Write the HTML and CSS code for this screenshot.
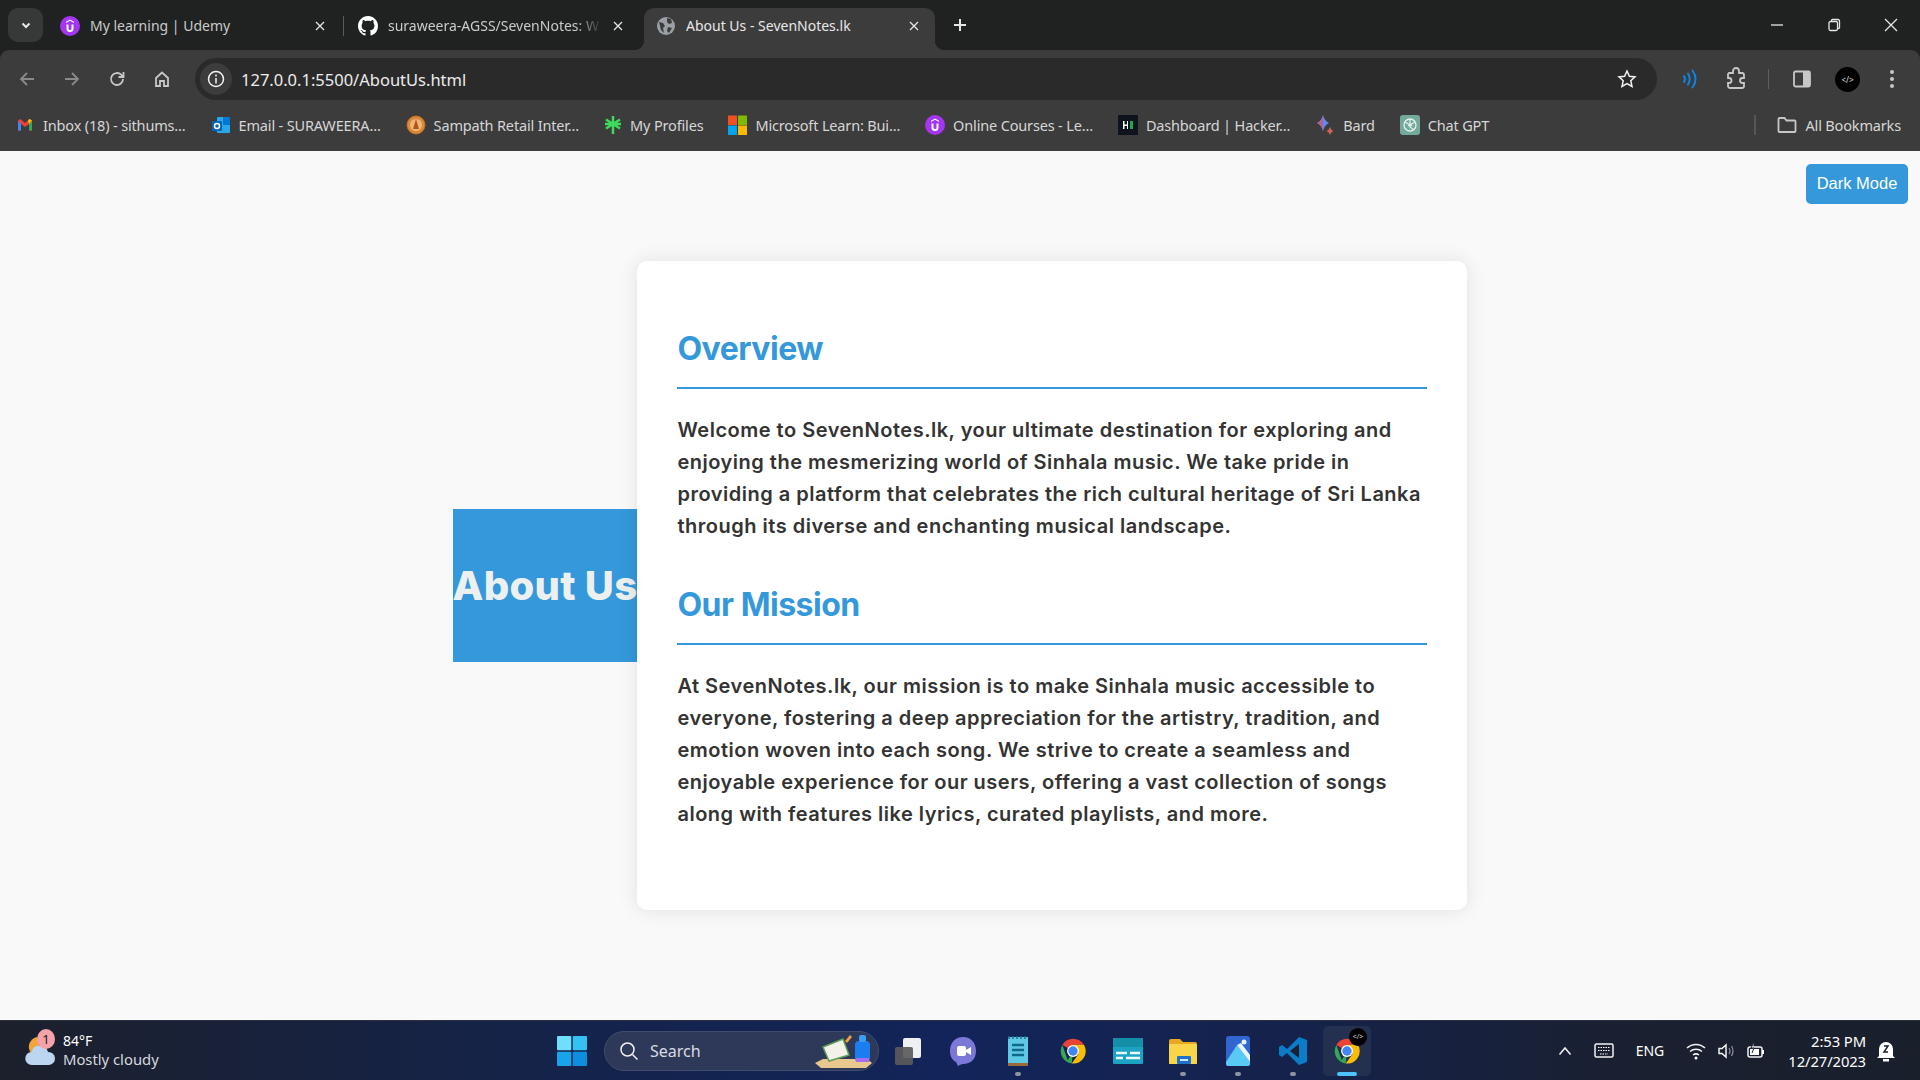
FILE: index.html
```html
<!DOCTYPE html>
<html lang="en">
<head>
<meta charset="utf-8">
<title>About Us - SevenNotes.lk</title>
<link rel="stylesheet" href="styles.css">
</head>
<body>
<svg class="defs" width="0" height="0">
  <defs>
    <symbol id="udemy" viewBox="0 0 20 20"><circle cx="10" cy="10" r="10" fill="#a435f0"/><path d="M6.500 8.500v4a3.500 3.500 0 0 0 7 0v-4h-2v4a1.500 1.500 0 0 1-3 0v-4z" fill="#fff"/><path d="M10 3.500l4 2.200v1.300l-4-2.200-4 2.200V5.700z" fill="#fff"/></symbol>
    <symbol id="chrome" viewBox="0 0 48 48"><path d="M24 24 7 14.200A20 20 0 0 1 41.500 14H24z" fill="#ea4335"/><path d="M24 24l-8.500 14.800L7 14.200A20 20 0 0 0 22 44z" fill="#34a853"/><path d="M24 14h17.500A20 20 0 0 1 22 44l10.500-15z" fill="#fbbc04"/><circle cx="24" cy="24" r="9.500" fill="#fff"/><circle cx="24" cy="24" r="7.500" fill="#4285f4"/></symbol>
  </defs>
</svg>

<div class="chrome">
<header class="tabstrip">
  <button class="tabmenu"><svg width="12" height="12" viewBox="0 0 12 12"><path d="M2.500 4.500 6 8l3.500-3.500" class="st-w2"/></svg></button>
  <div class="tab">
    <svg class="fav" width="20" height="20"><use href="#udemy"/></svg>
    <span class="tab-title">My learning | Udemy</span>
    <svg class="tab-x" width="12" height="12" viewBox="0 0 12 12"><path d="M2 2l8 8M10 2l-8 8" class="st-l"/></svg>
  </div>
  <div class="tab tab-sep">
    <svg class="fav" width="20" height="20" viewBox="0 0 16 16"><path fill="#fff" d="M8 0C3.580 0 0 3.580 0 8c0 3.540 2.290 6.530 5.470 7.590.4.070.55-.17.55-.38 0-.19-.01-.82-.01-1.490-2.010.37-2.530-.49-2.690-.94-.09-.23-.48-.94-.82-1.130-.28-.15-.68-.52-.01-.53.63-.01 1.080.58 1.230.82.720 1.210 1.870.870 2.330.660.070-.520.280-.870.510-1.070-1.780-.2-3.640-.890-3.640-3.950 0-.870.310-1.590.820-2.150-.08-.2-.36-1.020.08-2.120 0 0 .670-.210 2.200.820.640-.180 1.320-.270 2-.270s1.360.090 2 .270c1.530-1.040 2.200-.820 2.200-.820.440 1.100.160 1.920.080 2.120.510.560.820 1.270.820 2.150 0 3.070-1.870 3.750-3.650 3.950.290.250.540.730.540 1.480 0 1.070-.010 1.930-.010 2.200 0 .210.150.460.550.380A8.010 8.010 0 0 0 16 8c0-4.420-3.580-8-8-8z"/></svg>
    <span class="tab-title tab-fade">suraweera-AGSS/SevenNotes: W</span>
    <svg class="tab-x" width="12" height="12" viewBox="0 0 12 12"><path d="M2 2l8 8M10 2l-8 8" class="st-l"/></svg>
  </div>
  <div class="tab tab-active">
    <svg class="fav" width="20" height="20" viewBox="0 0 20 20"><circle cx="10" cy="10" r="9" fill="#9aa0a6"/><path d="M3 6l4 1 2 3-2 2 1 5-3-3zM11 2l4 1 1 4-3 1-2-2zM12 11l4 1-3 5-2-2z" fill="#3c3c3c"/></svg>
    <span class="tab-title tab-title-on">About Us - SevenNotes.lk</span>
    <svg class="tab-x" width="12" height="12" viewBox="0 0 12 12"><path d="M2 2l8 8M10 2l-8 8" class="st-l"/></svg>
  </div>
  <svg class="newtab" width="14" height="14" viewBox="0 0 14 14"><path d="M7 1v12M1 7h12" class="st-w2"/></svg>
  <div class="winctl">
    <svg width="14" height="14" viewBox="0 0 14 14"><path d="M1 7h12" class="st-l"/></svg>
    <svg width="14" height="14" viewBox="0 0 14 14"><rect x="2" y="3.500" width="8.500" height="9" rx="1.500" class="st-l"/><path d="M4.500 3.500V2.500a1 1 0 0 1 1-1H11a1.500 1.500 0 0 1 1.500 1.500v6.500a1 1 0 0 1-1 1h-1" class="st-l"/></svg>
    <svg width="14" height="14" viewBox="0 0 14 14"><path d="M1 1l12 12M13 1L1 13" class="st-l"/></svg>
  </div>
</header>

<nav class="toolbar">
  <svg class="tb-ic tb-back" width="18" height="18" viewBox="0 0 18 18"><path d="M16 9H3M9 3 3 9l6 6" class="st-dim"/></svg>
  <svg class="tb-ic" width="18" height="18" viewBox="0 0 18 18"><path d="M2 9h13M9 3l6 6-6 6" class="st-dim"/></svg>
  <svg class="tb-ic" width="18" height="18" viewBox="0 0 18 18"><path d="M15 9a6 6 0 1 1-1.800-4.300L15 6.500" class="st-br"/><path d="M15.500 2v5h-5" class="st-br"/></svg>
  <svg class="tb-ic" width="18" height="18" viewBox="0 0 18 18"><path d="M3 8 9 2.500 15 8v8h-4v-5H7v5H3z" class="st-br"/></svg>
  <div class="omnibox">
    <span class="info"><svg width="18" height="18" viewBox="0 0 18 18"><circle cx="9" cy="9" r="7.500" class="st-w"/><path d="M9 8v5.500M9 4.500v2" class="st-w"/></svg></span>
    <span class="url">127.0.0.1:5500/AboutUs.html</span>
    <svg class="star" width="20" height="20" viewBox="0 0 20 20"><path d="m10 2 2.400 5.300 5.600.6-4.200 3.800 1.200 5.700L10 14.500l-5 2.900 1.200-5.700L2 7.900l5.600-.6z" class="st-w"/></svg>
  </div>
  <div class="tb-right">
    <svg width="20" height="22" viewBox="0 0 20 22"><path d="M4 8q2 3 0 6M8 5.500q3.500 5.500 0 11M12.500 2.500q6 8.500 0 17" class="st-blue"/></svg>
    <svg class="tb-puzzle" width="22" height="24" viewBox="0 0 22 24"><path d="M4 6h4V4a3 3 0 0 1 6 0v2h3a2 2 0 0 1 2 2v3h-1.500a2.500 2.500 0 0 0 0 5H19v3a2 2 0 0 1-2 2H5a2 2 0 0 1-2-2v-3h1a2.500 2.500 0 0 0 0-5H3V7z" class="st-br"/></svg>
    <span class="tb-sep"></span>
    <svg width="20" height="20" viewBox="0 0 20 20"><rect x="2" y="2.500" width="16" height="15" rx="1.500" class="st-br"/><rect x="11" y="2.500" width="7" height="15" fill="#c7c7c7"/></svg>
    <span class="avatar">&lt;/&gt;</span>
    <svg width="6" height="20" viewBox="0 0 6 20"><circle cx="3" cy="3" r="2" fill="#c7c7c7"/><circle cx="3" cy="10" r="2" fill="#c7c7c7"/><circle cx="3" cy="17" r="2" fill="#c7c7c7"/></svg>
  </div>
</nav>

<nav class="bookmarks">
  <a class="bm"><svg width="20" height="16" viewBox="0 0 16 16"><path d="M1 3.500v10h3V7l4 3 4-3v6.500h3v-10L12.500 2 8 6 3.500 2z" fill="#ea4335"/><path d="M1 3.500v10h3V7z" fill="#4285f4"/><path d="M12 7v6.500h3v-10z" fill="#34a853"/><path d="M15 3.500 12.500 2 11 3.300 12 7z" fill="#fbbc04"/></svg>Inbox (18) - sithums...</a>
  <a class="bm"><svg width="20" height="18" viewBox="0 0 20 18"><rect x="6" y="1" width="13" height="16" rx="1" fill="#28a8ea"/><rect x="12" y="1" width="7" height="8" fill="#0078d4"/><rect x="1" y="5" width="10" height="10" rx="1" fill="#0364b8"/><circle cx="6" cy="10" r="2.500" fill="none" stroke="#fff" stroke-width="1.500"/></svg>Email - SURAWEERA...</a>
  <a class="bm"><svg width="20" height="20" viewBox="0 0 20 20"><circle cx="10" cy="10" r="9" fill="#d98a3a" stroke="#c96f1f"/><circle cx="10" cy="10" r="6" fill="#f0b67a"/><path d="M10 4l3 10H7z" fill="#b5541a"/></svg>Sampath Retail Inter...</a>
  <a class="bm"><svg width="18" height="20" viewBox="0 0 18 20"><path d="M9 1v18M2 4.500l14 9M16 4.500l-14 9M1 9h16" stroke="#3ddc5c" stroke-width="2.500" fill="none"/></svg>My Profiles</a>
  <a class="bm"><svg width="19" height="20" viewBox="0 0 19 20"><rect width="9" height="9.500" y=".5" fill="#f25022"/><rect x="10" y=".5" width="9" height="9.500" fill="#7fba00"/><rect y="10.500" width="9" height="9.500" fill="#00a4ef"/><rect x="10" y="10.500" width="9" height="9.500" fill="#ffb900"/></svg>Microsoft Learn: Bui...</a>
  <a class="bm"><svg width="20" height="20"><use href="#udemy"/></svg>Online Courses - Le...</a>
  <a class="bm"><svg width="20" height="20" viewBox="0 0 20 20"><rect width="20" height="20" fill="#0e141e"/><path d="M5 6v8h1.500v-3H9v3h1V6H9v3.500H6.500V6z" fill="#fff"/><rect x="12" y="6" width="3" height="8" fill="#1ba94c"/></svg>Dashboard | Hacker...</a>
  <a class="bm"><svg width="20" height="22" viewBox="0 0 20 22"><path d="M8 1q1.500 6 6 8-4.500 2-6 8-1.500-6-6-8 4.500-2 6-8z" fill="#5b8df0"/><path d="M8 1q-1.500 6-6 8 4.500 2 6 8z" fill="#b5608f"/><path d="M15 13q.8 3 3.500 4-2.700 1-3.500 4-.8-3-3.500-4 2.700-1 3.500-4z" fill="#d6605a"/></svg>Bard</a>
  <a class="bm"><svg width="20" height="20" viewBox="0 0 20 20"><rect width="20" height="20" rx="3" fill="#74aa9c"/><circle cx="10" cy="10" r="6" fill="none" stroke="#e8f1ee" stroke-width="1.300"/><path d="M10 4v8l4 3M5 7l7 4M15 7l-7 4" stroke="#e8f1ee" stroke-width="1.100" fill="none"/></svg>Chat GPT</a>
  <span class="bm-end"><span class="bm-sep"></span><a class="bm"><svg width="20" height="18" viewBox="0 0 20 18"><path d="M1.500 3a1 1 0 0 1 1-1h5l2 2.500h8a1 1 0 0 1 1 1V15a1 1 0 0 1-1 1h-15a1 1 0 0 1-1-1z" class="st-br"/></svg>All Bookmarks</a></span>
</nav>
</div>

<main class="page">
  <button class="dark-btn">Dark Mode</button>
  <h1 class="about-tag">About Us</h1>
  <article class="card">
    <section class="block">
      <h2 class="block-title">Overview</h2>
      <p class="block-text">Welcome to SevenNotes.lk, your ultimate destination for exploring and enjoying the mesmerizing world of Sinhala music. We take pride in providing a platform that celebrates the rich cultural heritage of Sri Lanka through its diverse and enchanting musical landscape.</p>
    </section>
    <section class="block">
      <h2 class="block-title">Our Mission</h2>
      <p class="block-text">At SevenNotes.lk, our mission is to make Sinhala music accessible to everyone, fostering a deep appreciation for the artistry, tradition, and emotion woven into each song. We strive to create a seamless and enjoyable experience for our users, offering a vast collection of songs along with features like lyrics, curated playlists, and more.</p>
    </section>
  </article>
</main>

<footer class="taskbar">
  <div class="weather">
    <span class="wx-ic">
      <svg width="36" height="36" viewBox="0 0 36 36"><path d="M14 4a10 10 0 0 0-6 16h10z" fill="#f2a33a"/><path d="M9 32a6.500 6.500 0 0 1-.5-13A8.500 8.500 0 0 1 25 19a6.500 6.500 0 0 1 1 13z" fill="#bcd6f2"/></svg>
      <span class="wx-badge">1</span>
    </span>
    <span class="wx-text"><b class="wx-temp">84°F</b><span>Mostly cloudy</span></span>
  </div>
  <div class="task-center">
    <svg class="start" width="30" height="30" viewBox="0 0 30 30"><rect width="14.300" height="14.300" rx="1" fill="#6ee0fb"/><rect x="15.700" width="14.300" height="14.300" rx="1" fill="#35c2f2"/><rect y="15.700" width="14.300" height="14.300" rx="1" fill="#19a4ea"/><rect x="15.700" y="15.700" width="14.300" height="14.300" rx="1" fill="#0d8fe0"/></svg>
    <div class="search">
      <svg width="20" height="20" viewBox="0 0 20 20"><circle cx="8.500" cy="8.500" r="6.500" class="st-w"/><path d="m13.500 13.500 5 5" class="st-w"/></svg>
      <span class="search-label">Search</span>
      <svg class="search-art" width="60" height="36" viewBox="0 0 60 36"><path d="M2 30 10 26h44l5 4-6 5H8z" fill="#e8c88f"/><path d="M10 14 30 6l6 16-20 6z" fill="#f2f2ea" stroke="#5f9e58" stroke-width="1.500"/><path d="m32 8 5-6 2 2-5 6z" fill="#f0a040"/><rect x="42" y="8" width="15" height="21" rx="4" fill="#1c7df0"/><rect x="46" y="2" width="7" height="7" rx="2" fill="#3aa0f5"/><rect x="43" y="25" width="13" height="4" fill="#a86cf0"/></svg>
    </div>
    <div class="apps">
      <span class="app"><svg width="30" height="30" viewBox="0 0 30 30"><rect x="10" y="2" width="18" height="20" rx="2" fill="#eef0f2"/><rect x="2" y="11" width="18" height="18" rx="2" fill="#5b5b5b" opacity=".92"/></svg></span>
      <span class="app"><svg width="30" height="32" viewBox="0 0 30 32"><path d="M15 2c8 0 13 6 13 14s-5 13-13 13c-2 0-3 1-5 2-1-1-1-3-2-4-4-2-6-6-6-11C2 8 7 2 15 2z" fill="#7c78d8"/><rect x="9" y="11" width="9" height="10" rx="2" fill="#fff"/><path d="m18 15 5-3v8l-5-3z" fill="#fff"/></svg></span>
      <span class="app app-open"><svg width="24" height="32" viewBox="0 0 24 32"><rect x="2" y="2" width="20" height="29" fill="#5fc8e4"/><rect x="2" y="28" width="20" height="3" fill="#9a6a3a"/><path d="M3 1v3M7 1v3M11 1v3M15 1v3M19 1v3" stroke="#1d6f8c" stroke-width="1.500"/><path d="M6 10h12M6 15h12M6 20h12" stroke="#0d6a8a" stroke-width="2.500"/></svg></span>
      <span class="app"><svg width="30" height="30"><use href="#chrome"/></svg></span>
      <span class="app"><svg width="30" height="30" viewBox="0 0 30 30"><rect y="2" width="30" height="26" rx="1" fill="#1ba3c4"/><rect y="2" width="30" height="9" fill="#158ea8"/><path d="M3 17h11M17 17h10M3 22h7M13 22h14" stroke="#eaf8fb" stroke-width="2.500"/></svg></span>
      <span class="app app-open"><svg width="30" height="30" viewBox="0 0 30 30"><path d="M1 5a2 2 0 0 1 2-2h9l3 3h12a2 2 0 0 1 2 2v19a1 1 0 0 1-1 1H2a1 1 0 0 1-1-1z" fill="#e9a821"/><rect x="1" y="8" width="28" height="20" rx="1" fill="#f8d549"/><rect x="9" y="20" width="14" height="8" rx="1" fill="#1d72c9"/><rect x="12" y="23" width="8" height="2" fill="#cfe6fa"/></svg></span>
      <span class="app app-open"><svg width="26" height="32" viewBox="0 0 26 32"><rect x="1" y="1" width="24" height="30" rx="3" fill="#2f66cf"/><path d="M1 27 12 10l13 17v2a2 2 0 0 1-2 2H3a2 2 0 0 1-2-2z" fill="#59c9f5"/><path d="m12 10 13 17v-7L16 8z" fill="#e8f7fd"/><circle cx="19" cy="7" r="2.500" fill="#dff3fc"/></svg></span>
      <span class="app app-open"><svg width="30" height="30" viewBox="0 0 30 30"><path d="M21 1 9 13 4 9 1 11v8l3 2 5-4 12 12 8-3V4z" fill="#0a7cc8"/><path d="M21 8v14l-9-7z" fill="#1d1f33"/></svg></span>
      <span class="app app-active">
        <svg width="30" height="30"><use href="#chrome"/></svg>
        <span class="app-code">&lt;/&gt;</span>
        <span class="app-bar"></span>
      </span>
    </div>
  </div>
  <div class="tray">
    <svg width="14" height="10" viewBox="0 0 14 10"><path d="M1.500 8.500 7 2l5.500 6.500" class="st-w"/></svg>
    <svg width="20" height="16" viewBox="0 0 20 16"><rect x="1" y="1" width="18" height="13" rx="1.500" class="st-w"/><path d="M4 4.500h12M4 7.500h12M6 11h8" stroke="#fff" stroke-dasharray="1.500 1" fill="none"/></svg>
    <span class="lang">ENG</span>
    <span class="tray-net">
      <svg width="20" height="18" viewBox="0 0 20 18"><path d="M1 6a13 13 0 0 1 18 0M4 9.500a9 9 0 0 1 12 0M7 13a5 5 0 0 1 6 0" class="st-w"/><circle cx="10" cy="16" r="1.500" fill="#fff"/></svg>
      <svg width="18" height="18" viewBox="0 0 18 18"><path d="M2 6.500h3L9 3v12l-4-3.500H2z" class="st-w"/><path d="M12 6q2 3 0 6M14.500 4q3 5 0 10" class="st-w-dim"/></svg>
      <svg width="20" height="18" viewBox="0 0 20 18"><rect x="2" y="5" width="14" height="10" rx="2" class="st-w"/><rect x="16" y="8" width="2" height="4" fill="#fff"/><rect x="4" y="7" width="9" height="6" fill="#fff"/><path d="M8 0 5 6h3l-2 5" stroke="#1a2030" fill="#fff"/></svg>
    </span>
    <span class="clock"><span>2:53 PM</span><span>12/27/2023</span></span>
    <svg class="bell" width="20" height="22" viewBox="0 0 20 22"><path d="M3 16V9a7 7 0 0 1 14 0v7l2 2H1z" fill="#fff"/><rect x="7" y="19" width="6" height="2.500" fill="#fff"/><path d="M8 6h4l-4 6h4" stroke="#1a2030" stroke-width="1.500" fill="none"/></svg>
  </div>
</footer>
</body>
</html>
```

FILE: styles.css
```css
* { box-sizing: border-box; }
html, body { height: 100%; margin: 0; }
body {
  display: flex;
  flex-direction: column;
  height: 1080px;
  overflow: hidden;
  font-family: "Noto Sans", "Open Sans", sans-serif;
  background: #f9f9f9;
}
.defs { position: absolute; }
.st-l { fill: none; stroke: #e6e6e6; stroke-width: 1.3; }
.st-w { fill: none; stroke: #f2f2f2; stroke-width: 1.5; }
.st-w-dim { fill: none; stroke: #8d93a3; stroke-width: 1.2; }
.st-w2 { fill: none; stroke: #e8e8e8; stroke-width: 2; }
.st-dim { fill: none; stroke: #8a8a8a; stroke-width: 1.8; }
.st-br { fill: none; stroke: #c7c7c7; stroke-width: 1.8; }
.st-blue { fill: none; stroke: #0d84e4; stroke-width: 2; stroke-linecap: round; }

.chrome { flex: none; background: #202221; }

/* tab strip */
.tabstrip {
  height: 50px;
  display: flex;
  align-items: flex-end;
  padding-left: 8px;
}
.tabmenu {
  flex: 0 0 35px;
  height: 34px;
  margin: 0 5px 8px 0;
  padding: 0;
  border: 0;
  border-radius: 10px;
  background: #373938;
  display: flex;
  align-items: center;
  justify-content: center;
}
.tab {
  flex: 0 0 298px;
  height: 42px;
  display: flex;
  align-items: center;
  gap: 10px;
  padding: 0 20px 7px 12px;
  position: relative;
  font-size: 14px;
  color: #c9cbca;
}
.tab-sep::before {
  content: "";
  position: absolute;
  left: -3px;
  top: 8px;
  height: 20px;
  width: 1px;
  background: #5a5c5b;
}
.tab-active {
  flex-basis: 291px;
  padding-right: 15px;
  background: #3c3c3c;
  border-radius: 10px 10px 0 0;
  color: #e8e8e8;
}
.tab-active::before, .tab-active::after {
  content: "";
  position: absolute;
  bottom: 0;
  width: 10px;
  height: 10px;
}
.tab-active::before { left: -10px; background: radial-gradient(circle at 0 0, transparent 10px, #3c3c3c 10.5px); }
.tab-active::after { right: -10px; background: radial-gradient(circle at 100% 0, transparent 10px, #3c3c3c 10.5px); }
.fav { flex: none; }
.tab-title { flex: 1; white-space: nowrap; overflow: hidden; }
.tab-fade { -webkit-mask-image: linear-gradient(90deg, #000 88%, transparent); mask-image: linear-gradient(90deg, #000 88%, transparent); }
.tab-x { flex: none; }
.newtab { margin: 0 0 18px 18px; }
.winctl {
  margin-left: auto;
  display: flex;
  gap: 43px;
  padding-right: 22px;
  align-self: center;
  align-items: center;
}

/* toolbar */
.toolbar {
  height: 50px;
  display: flex;
  align-items: center;
  padding: 8px 11px 0 18px;
  background: #3c3c3c;
  border-radius: 9px 9px 0 0;
}
.tb-ic { margin-right: 27px; flex: none; }
.omnibox {
  flex: 0 0 1462px;
  margin-left: -3px;
  height: 42px;
  display: flex;
  align-items: center;
  padding: 0 20px 0 5px;
  border-radius: 21px;
  background: #2a2a2a;
}
.info {
  width: 32px;
  height: 32px;
  border-radius: 50%;
  background: #3c3c3c;
  display: flex;
  align-items: center;
  justify-content: center;
}
.url { flex: 1; padding-left: 9px; font-size: 16.5px; color: #ececec; }
.star { flex: none; }
.tb-right {
  flex: 1;
  display: flex;
  align-items: center;
  gap: 23px;
  padding-left: 23px;
}
.tb-puzzle { margin-left: 2px; margin-right: -2px; }
.tb-sep { width: 1px; height: 20px; background: #5e5e5e; }
.avatar {
  width: 25px;
  height: 25px;
  margin-right: 6px;
  border-radius: 50%;
  background: #000;
  color: #ddd;
  font-size: 8px;
  display: flex;
  align-items: center;
  justify-content: center;
}

/* bookmarks */
.bookmarks {
  height: 51px;
  display: flex;
  align-items: center;
  gap: 25px;
  padding: 0 19px 2px 15px;
  background: #3c3c3c;
}
.bm {
  display: flex;
  align-items: center;
  gap: 8px;
  font-size: 14.5px;
  letter-spacing: -.16px;
  color: #d6d6d6;
  white-space: nowrap;
}
.bm svg { flex: none; }
.bm-end {
  margin-left: auto;
  display: flex;
  align-items: center;
  gap: 21px;
}
.bm-sep { width: 2px; height: 20px; background: #565656; }

/* page */
.page {
  flex: 1;
  min-height: 0;
  position: relative;
  display: flex;
  align-items: center;
  justify-content: center;
  font-family: "Inter", "Open Sans", sans-serif;
}
.dark-btn {
  position: absolute;
  top: 13px;
  right: 12px;
  width: 102px;
  height: 40px;
  padding: 0 0 2px;
  border: 0;
  border-radius: 5px;
  background: #3498db;
  color: #fff;
  font-family: "Liberation Sans", Arial, sans-serif;
  font-size: 16.5px;
}
.about-tag {
  flex: 0 0 184px;
  height: 153px;
  margin: 0;
  display: flex;
  align-items: center;
  justify-content: center;
  background: #3498db;
  color: #ecf0f1;
  font-size: 40px;
  font-weight: 800;
  letter-spacing: .3px;
  white-space: nowrap;
}
.card {
  flex: 0 0 830px;
  height: 649px;
  padding: 61px 40px 0;
  background: #fff;
  border-radius: 10px;
  box-shadow: 0 0 20px rgba(0, 0, 0, .1);
}
.block { margin-bottom: 36px; }
.block-title {
  margin: 0 0 25px;
  padding: 1px 0 13px;
  border-bottom: 2px solid #3498db;
  color: #3498db;
  font-size: 32px;
  font-weight: 700;
  letter-spacing: -.5px;
  line-height: 51px;
}
.block-text {
  margin: 0;
  color: #333;
  font-size: 20px;
  font-weight: 600;
  letter-spacing: .5px;
  line-height: 32px;
}

/* taskbar */
.taskbar {
  flex: 0 0 60px;
  display: grid;
  grid-template-columns: 557px auto 1fr;
  align-items: center;
  background: linear-gradient(90deg, #1c202c 0%, #152347 25%, #12245a 50%, #15224a 68%, #1a2030 85%, #1a1f2c 100%);
  border-top: 1px solid #2a3040;
  color: #fff;
}
.weather {
  display: flex;
  align-items: center;
  gap: 4px;
  padding-left: 23px;
}
.wx-ic { position: relative; width: 36px; height: 36px; }
.wx-badge {
  position: absolute;
  top: -4px;
  left: 14px;
  width: 18px;
  height: 20px;
  border-radius: 50%;
  background: #f5a3a8;
  color: #222;
  font-size: 13px;
  line-height: 20px;
  text-align: center;
}
.wx-text { display: flex; flex-direction: column; font-size: 14.8px; line-height: 19px; padding-bottom: 2px; }
.wx-temp { font-weight: 400; font-size: 14px; }
.wx-text span { color: #d6d8de; }
.task-center { display: flex; align-items: center; }
.start { margin-right: 17px; }
.search {
  width: 275px;
  height: 40px;
  display: flex;
  align-items: center;
  gap: 11px;
  padding: 0 5px 0 14px;
  border-radius: 20px;
  border: 1px solid #414b6e;
  background: #2e3859;
  position: relative;
}
.search-label { font-size: 16px; color: #d9dbe3; flex: 1; }
.search-art { flex: none; }
.apps { display: flex; align-items: center; margin-left: 1px; }
.app {
  position: relative;
  width: 55px;
  height: 50px;
  display: flex;
  align-items: center;
  justify-content: center;
}
.app-open::after {
  content: "";
  position: absolute;
  left: 50%;
  bottom: 0;
  width: 6px;
  height: 4px;
  margin-left: -3px;
  border-radius: 2px;
  background: #8d93a3;
}
.app-active {
  width: 48px;
  margin-left: 3px;
  border-radius: 5px;
  background: #243050;
}
.app-code {
  position: absolute;
  top: 2px;
  right: 4px;
  width: 18px;
  height: 18px;
  border-radius: 50%;
  background: #000;
  color: #ccc;
  font-size: 7px;
  line-height: 18px;
  text-align: center;
}
.app-bar {
  position: absolute;
  left: 14px;
  bottom: 0;
  width: 20px;
  height: 4px;
  border-radius: 2px;
  background: #4cc2ff;
}
.tray {
  display: flex;
  align-items: center;
  justify-content: flex-end;
  gap: 22px;
  padding-right: 24px;
}
.lang { font-size: 14px; }
.tray-net { display: flex; align-items: center; gap: 11px; }
.clock {
  display: flex;
  flex-direction: column;
  align-items: flex-end;
  font-size: 14.8px;
  line-height: 20px;
  letter-spacing: -.1px;
}
.bell { margin-left: -12px; }
```
